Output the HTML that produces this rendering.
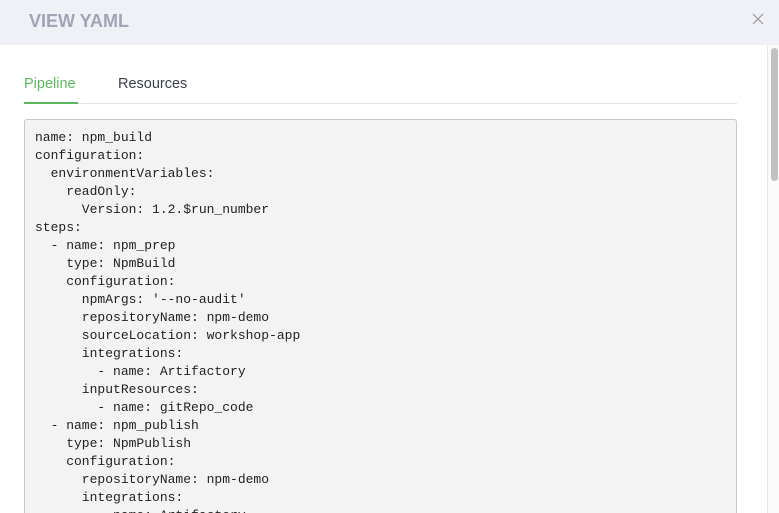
<!DOCTYPE html>
<html><head><style>
html,body{margin:0;padding:0;width:779px;height:513px;overflow:hidden;background:#fff;font-family:"Liberation Sans","DejaVu Sans",sans-serif;}
.wrap{position:relative;width:779px;height:513px;overflow:hidden;}
.hdr{position:absolute;left:0;top:0;width:779px;height:45px;background:#f0f1f6;}
.hdr .t{position:absolute;left:29px;top:11px;font-size:18px;font-weight:bold;color:#a2a4b6;}
.x{position:absolute;left:752px;top:13px;}
.line{position:absolute;left:24px;top:103px;width:713px;height:1px;background:#e3e4e8;}
.tab{position:absolute;top:76px;font-size:14.5px;}
.p{left:24px;color:#5cb85c;}
.u{position:absolute;left:24px;top:102px;width:54px;height:2px;background:#5cb85c;}
.r{left:118px;color:#3a3f4b;}
.code{position:absolute;left:24px;top:119px;width:711px;height:394px;background:#f3f3f3;border:1px solid #c8c8c8;border-bottom:none;border-radius:3px 3px 0 0;overflow:hidden;}
pre{margin:0;position:absolute;left:10px;top:9px;font-family:"Liberation Mono",monospace;font-size:13px;line-height:18px;color:#222;}
.sb{position:absolute;left:767px;top:45px;width:12px;height:468px;background:#fafafa;border-left:1px solid #e6e6e6;box-sizing:border-box;}
.th{position:absolute;left:3px;top:3px;width:7px;height:133px;background:#c1c1c1;border-radius:4px;}
</style></head><body><div class="wrap">
<div class="hdr"><div class="t">VIEW YAML</div>
<svg class="x" width="12" height="12" viewBox="0 0 12 12"><path d="M1 1L11 11M11 1L1 11" stroke="#999" stroke-width="1.2"/></svg></div>
<div class="line"></div>
<div class="tab p">Pipeline</div><div class="u"></div>
<div class="tab r">Resources</div>
<div class="code"><pre>name: npm_build
configuration:
  environmentVariables:
    readOnly:
      Version: 1.2.$run_number
steps:
  - name: npm_prep
    type: NpmBuild
    configuration:
      npmArgs: '--no-audit'
      repositoryName: npm-demo
      sourceLocation: workshop-app
      integrations:
        - name: Artifactory
      inputResources:
        - name: gitRepo_code
  - name: npm_publish
    type: NpmPublish
    configuration:
      repositoryName: npm-demo
      integrations:
        - name: Artifactory</pre></div>
<div class="sb"><div class="th"></div></div>
</div></body></html>
